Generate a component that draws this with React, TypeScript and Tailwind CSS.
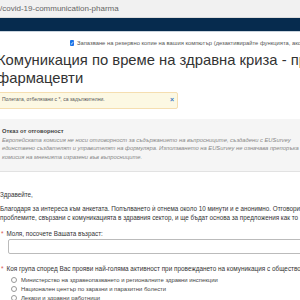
const options = [
  "Министерство на здравеопазването и регионалните здравни инспекции",
  "Национален център по заразни и паразитни болести",
  "Лекари и здравни работници",
];

export default function App() {
  return (
    <div className="h-[300px] w-[300px] overflow-hidden bg-white font-['Liberation_Sans',Arial,sans-serif] text-[#333]">
      {/* address bar */}
      <div className="h-[18px] border-b border-[#dcdcdc] bg-[#f1f1f1] text-[8px] leading-[17px] whitespace-nowrap text-[#666]">
        /covid-19-communication-pharma
      </div>

      {/* nav */}
      <div className="h-[14px] border-b border-[#c9d3dd] bg-[#062b4e]" />

      <div className="-ml-[3px]">
        <div className="mt-[7px] flex items-center gap-[3px] pl-[73px] text-[5.8px] whitespace-nowrap text-[#555]">
          <span className="flex h-[6px] w-[6px] items-center justify-center rounded-[1px] bg-[#1a73e8] text-[5px] leading-none text-white">
            ✓
          </span>
          Запазване на резервно копие на вашия компютър (дезактивирайте функцията, ако
        </div>

        <h1 className="mt-[3px] text-[14.8px] leading-[18px] whitespace-nowrap text-[#333]">
          <div>Комуникация по време на здравна криза - провеждане</div>
          <div>фармацевти</div>
        </h1>

        <div className="mt-[5px] flex h-[17px] w-[181px] items-center justify-between rounded-[2px] border border-[#f5deb0] bg-[#fcf8e3] pr-[3px] pl-[4px] text-[5px] text-[#555]">
          <span>Полетата, отбелязани с *, са задължителни.</span>
          <span className="text-[7px] font-bold text-[#3a78c3]">×</span>
        </div>

        <div className="mt-[10px] h-[53px] border-b border-[#e2e2e2] bg-[#f5f5f5] pt-[8px] pl-[5px] text-[5.8px] whitespace-nowrap">
          <div className="font-bold leading-[9px] text-[#444]">Отказ от отговорност</div>
          <div className="leading-[8.5px] text-[#888] italic">
            <div>Европейската комисия не носи отговорност за съдържанието на въпросниците, създадени с EUSurvey</div>
            <div>единствено създателят и управителят на формуляра. Използването на EUSurvey не означава препоръка</div>
            <div>комисия на мненията изразени във въпросниците.</div>
          </div>
        </div>

        <div className="mt-[18px] pl-[3px] text-[6.3px] leading-[9px] whitespace-nowrap text-[#333]">
          <div>Здравейте,</div>
          <div className="mt-[5px]">
            Благодаря за интереса към анкетата. Попълването ѝ отнема около 10 минути и е анонимно. Отговорите
          </div>
          <div>
            проблемите, свързани с комуникацията в здравния сектор, и ще бъдат основа за предложения как то
          </div>
        </div>

        <div className="mt-[7px] pl-[4px] text-[6.3px] leading-[9px] whitespace-nowrap">
          <span className="text-[#d9534f]">*</span>
          <span className="ml-[3px] text-[#333]">Моля, посочете Вашата възраст:</span>
        </div>
        <div className="mt-[1px] ml-[11px] h-[15px] w-[300px] rounded-[2px] border border-[#bbb] bg-white" />

        <div className="mt-[10px] pl-[4px] text-[6.4px] leading-[9px] whitespace-nowrap">
          <span className="text-[#d9534f]">*</span>
          <span className="ml-[3px] text-[#333]">
            Коя група според Вас прояви най-голяма активност при провеждането на комуникация с обществото
          </span>
        </div>
        <div className="mt-[3px] flex flex-col pl-[14px]">
          {options.map((o) => (
            <div key={o} className="flex h-[9px] items-center gap-[4px] text-[5.9px] whitespace-nowrap text-[#444]">
              <span className="h-[6px] w-[6px] rounded-full border border-[#999] bg-white" />
              {o}
            </div>
          ))}
        </div>
      </div>
    </div>
  );
}
